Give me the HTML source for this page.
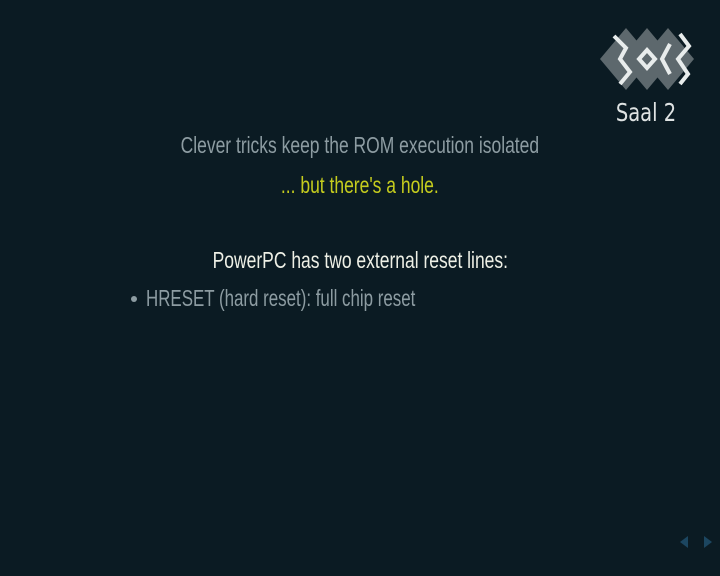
<!DOCTYPE html>
<html><head><style>
html,body{margin:0;padding:0;}
body{width:720px;height:576px;background:#0b1b23;position:relative;overflow:hidden;font-family:"Liberation Sans",sans-serif;}
.l{position:absolute;left:0;width:720px;text-align:center;white-space:nowrap;}
.l span{display:inline-block;transform-origin:center;}
</style></head><body>
<div class="l" style="top:132px;font-size:23px;color:#8d9ca2;"><span style="transform:scaleX(0.76)">Clever tricks keep the ROM execution isolated</span></div>
<div class="l" style="top:172px;font-size:23px;color:#c5cc1e;"><span style="transform:scaleX(0.76)">... but there's a hole.</span></div>
<div class="l" style="top:247px;font-size:23px;color:#eef0e6;"><span style="transform:scaleX(0.76)">PowerPC has two external reset lines:</span></div>
<div style="position:absolute;left:131px;top:296px;width:6px;height:6px;border-radius:50%;background:#8d9ca2"></div>
<div style="position:absolute;left:146px;top:285px;font-size:23px;color:#8d9ca2;white-space:nowrap;transform:scaleX(0.735);transform-origin:left center">HRESET (hard reset): full chip reset</div>
<svg style="position:absolute;left:590px;top:20px" width="120" height="110" viewBox="0 0 120 110">
<g fill="#5d686d">
<polygon points="10,39 36,8 62,39 36,70"/>
<polygon points="31,39 57,8 83,39 57,70"/>
<polygon points="52,39 78,8 104,39 78,70"/>
</g>
<g fill="none" stroke="#e8ecec" stroke-width="4">
<polyline points="24,16 36,28 30,39 40,52 30,64"/>
<polygon points="57,30 65,39 57,48 49,39"/>
<polyline points="80,24 72,39 80,54"/>
<polyline points="90,14 99,26 88,39 98,54 90,64"/>
</g>
</svg>
<div style="position:absolute;left:606px;top:98px;width:80px;text-align:center;font-family:'DejaVu Sans',sans-serif;font-size:25px;color:#dfe3e3;transform:scaleX(0.78);transform-origin:center">Saal 2</div>
<svg style="position:absolute;left:676px;top:534px" width="40" height="16">
<polygon points="4,8 12,2 12,14" fill="#1c4660"/>
<polygon points="36,8 28,2 28,14" fill="#1c4660"/>
</svg>
</body></html>
